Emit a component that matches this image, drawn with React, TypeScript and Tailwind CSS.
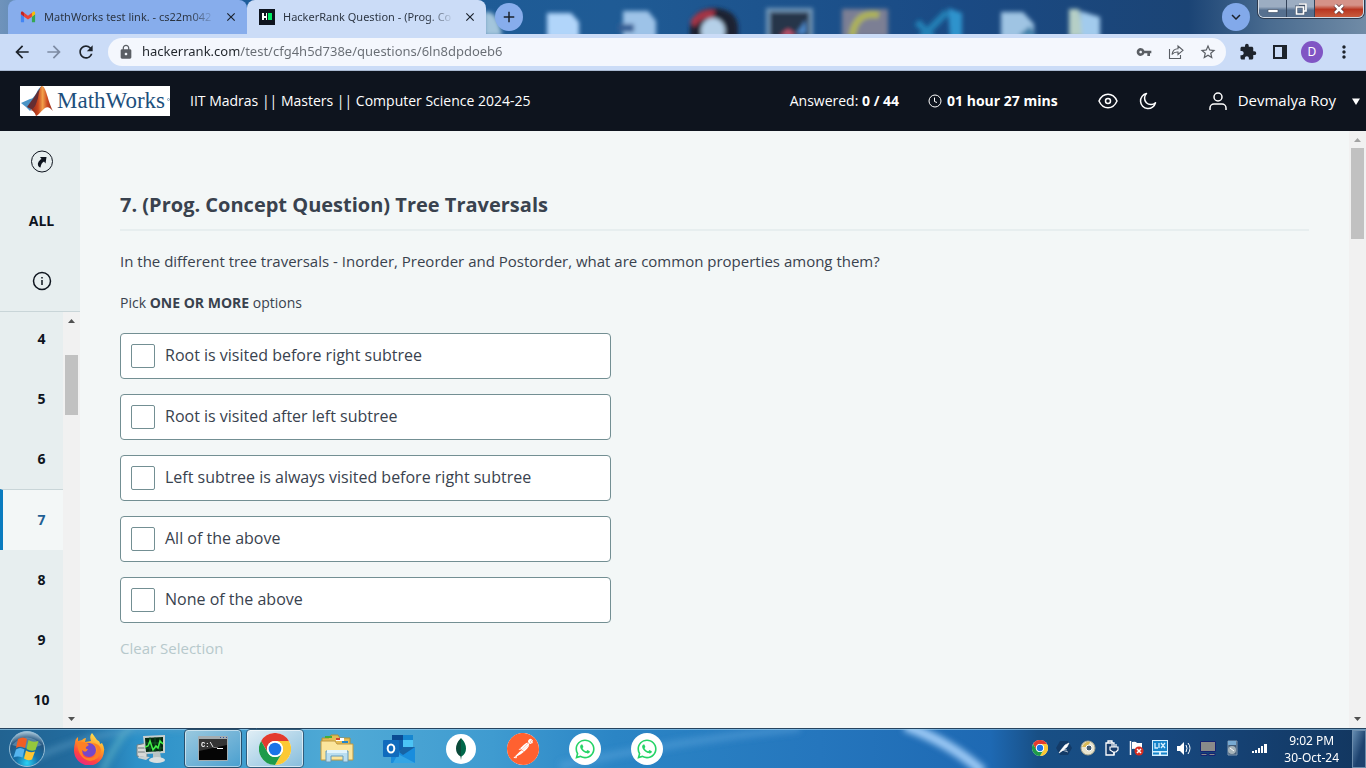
import type { ReactNode } from "react";
import { MdArrowBack, MdArrowForward, MdRefresh, MdLock, MdVpnKey, MdStarBorder, MdExtension, MdMoreVert, MdClose, MdAdd, MdKeyboardArrowDown } from "react-icons/md";
import { FaWhatsapp } from "react-icons/fa";
import { SiPostman } from "react-icons/si";

const options = [
  "Root is visited before right subtree",
  "Root is visited after left subtree",
  "Left subtree is always visited before right subtree",
  "All of the above",
  "None of the above",
];

const questions = [4, 5, 6, 7, 8, 9, 10];

function ChromeLogo({ className }: { className: string }) {
  return (
    <svg viewBox="0 0 48 48" className={className} aria-hidden="true">
      <circle cx="24" cy="24" r="24" fill="#fff" />
      <path d="M3.2 12A24 24 0 0 1 44.8 12L24 12A12 12 0 0 0 13.6 30Z" fill="#e33b2e" />
      <path d="M44.8 12A24 24 0 0 1 24 48L34.4 30A12 12 0 0 0 24 12Z" fill="#fcc934" />
      <path d="M24 48A24 24 0 0 1 3.2 12L13.6 30A12 12 0 0 0 34.4 30Z" fill="#1e9b4a" />
      <circle cx="24" cy="24" r="12" fill="#fff" />
      <circle cx="24" cy="24" r="9.5" fill="#1a73e8" />
    </svg>
  );
}

function GmailLogo() {
  return (
    <svg viewBox="-1 0 18 12" className="h-3 w-4 shrink-0" aria-hidden="true">
      <path d="M1 12h2.6V5.6L0 2.9V11a1 1 0 0 0 1 1Z" fill="#4285f4" />
      <path d="M12.4 12H15a1 1 0 0 0 1-1V2.9l-3.6 2.7Z" fill="#34a853" />
      <path d="M12.4 1.2v4.4L16 2.9V1.5c0-1.4-1.5-2-2.5-1.2Z" fill="#fbbc04" />
      <path d="M3.6 5.6V1.2L8 4.5l4.4-3.3v4.4L8 8.9Z" fill="#ea4335" />
      <path d="M0 1.5v1.4l3.6 2.7V1.2L2.5.3C1.4-.5 0 .1 0 1.5Z" fill="#c5221f" />
    </svg>
  );
}

function HackerRankLogo() {
  return (
    <svg viewBox="0 0 16 16" className="size-4 shrink-0" aria-hidden="true">
      <rect width="16" height="16" fill="#0e141e" />
      <path d="M3 4h2v3h2V4h1v7H7V9H5v2H3Z" fill="#fff" />
      <rect x="9" y="4" width="4" height="7" fill="#00ea64" />
    </svg>
  );
}

function DesktopBackdrop() {
  return (
    <svg viewBox="0 0 1366 34" preserveAspectRatio="none" className="absolute inset-0 size-full" aria-hidden="true">
      <defs>
        <linearGradient id="sky">
          <stop offset="0" stopColor="#6f93bb" />
          <stop offset=".1" stopColor="#1c5c9a" />
          <stop offset=".45" stopColor="#1f5b95" />
          <stop offset=".7" stopColor="#1a4a84" />
          <stop offset=".87" stopColor="#1b4475" />
          <stop offset=".93" stopColor="#4a6c90" />
          <stop offset="1" stopColor="#708ba6" />
        </linearGradient>
        <filter id="frost" x="-20%" y="-50%" width="140%" height="200%">
          <feGaussianBlur stdDeviation="2" />
        </filter>
      </defs>
      <rect width="1366" height="34" fill="url(#sky)" />
      <g filter="url(#frost)">
        <path d="M484 12q14-3 18 24h-18z" fill="#a3c5dc" />
        <path d="M547 13h24l8 9v16h-32z" fill="#b1d5fa" />
        <path d="M623 11h25l8 10v17h-33z" fill="#9dc3e8" />
        <path d="M618 24h16v8h-16z" fill="#355f95" />
        <path d="M690 28q2-20 26-20q20 2 22 18v12h-48z" fill="#1a2233" />
        <path d="M690 22q8-14 25-12l-2 8q-14 0-18 9z" fill="#a63646" />
        <ellipse cx="713" cy="31" rx="12" ry="13" fill="#b5d0e8" />
        <path d="M766 8h47v30h-47z" fill="#7196b8" />
        <path d="M770 12h39v26h-39z" fill="#26364a" />
        <path d="m780 36 8-7 8 6z" fill="#cc5770" />
        <path d="m796 34 10-14v14z" fill="#4b86c8" />
        <path d="M842 9h46v28h-46z" fill="#7c7f94" />
        <path d="M879 15q-24-4-27 22" fill="none" stroke="#adb259" strokeWidth="7" />
        <path d="m917 22 16 16m-14 2 28-28" fill="none" stroke="#2080b5" strokeWidth="7" />
        <path d="m948 8 14 5v26h-12z" fill="#2f93cc" />
        <path d="M1001 12h22l11 12v14h-33z" fill="#9fc4e3" />
        <path d="m1018 36 12-10 7 11z" fill="#3e7fa9" />
        <path d="M1069 9h10l5 28h-15z" fill="#b5cfc6" />
        <path d="m1080 11 20 6v21h-18z" fill="#a2cbed" />
      </g>
    </svg>
  );
}

function Tab({ title, icon, active }: { title: string; icon: ReactNode; active?: boolean }) {
  return (
    <div className={`flex w-[239px] items-center gap-2 rounded-t-lg pr-2 pl-3 ${active ? "bg-[#cbdcf7]" : "bg-[#87adec]"}`}>
      {icon}
      <span className="flex-1 bg-linear-to-r from-[#29323f] from-85% to-transparent bg-clip-text text-[11px] whitespace-nowrap text-transparent">{title}</span>
      <button aria-label="Close tab" className="flex size-4 items-center justify-center text-[#1b222c]">
        <MdClose size={14} />
      </button>
    </div>
  );
}

function BrowserChrome() {
  return (
    <div className="shrink-0 font-['Noto_Sans','Open_Sans',sans-serif]">
      <div className="relative h-[34px]">
        <DesktopBackdrop />
        <div className="relative flex h-full items-start">
          <div className="flex h-full pl-2">
            <Tab title="MathWorks test link. - cs22m042" icon={<GmailLogo />} />
            <Tab active title="HackerRank Question - (Prog. Co" icon={<HackerRankLogo />} />
          </div>
          <button aria-label="New tab" className="mt-[3px] ml-[9px] flex size-7 items-center justify-center rounded-full bg-[#87adec] text-[#1b222c]">
            <MdAdd size={18} />
          </button>
          <button aria-label="Search tabs" className="mt-[3px] mr-2 ml-auto flex size-7 items-center justify-center rounded-full bg-[#82a9ea] text-[#1b222c]">
            <MdKeyboardArrowDown size={18} />
          </button>
          <div className="mr-0.5 flex h-[18px] overflow-hidden rounded-b-md border border-t-0 border-[#d3dbe5] text-white ring-1 ring-[#2c3a4e]">
            <button aria-label="Minimize" className="flex w-7 items-center justify-center border-r border-[#33435a] bg-linear-to-b from-[#9cadc2] from-40% to-[#56708f] to-60%">
              <svg viewBox="0 0 12 12" className="size-3" aria-hidden="true">
                <path d="M1 6.500h10v3H1z" fill="#fff" stroke="#46566c" strokeWidth=".7" />
              </svg>
            </button>
            <button aria-label="Restore" className="flex w-7 items-center justify-center border-r border-[#33435a] bg-linear-to-b from-[#9cadc2] from-40% to-[#56708f] to-60%">
              <svg viewBox="0 0 12 12" className="size-3" aria-hidden="true">
                <path d="M4 1h7v7H9M1.500 4h7v7h-7z" fill="none" stroke="#46566c" strokeWidth="3" />
                <path d="M4 1h7v7H9M1.500 4h7v7h-7z" fill="none" stroke="#fff" strokeWidth="1.700" />
              </svg>
            </button>
            <button aria-label="Close window" className="flex w-12 items-center justify-center bg-linear-to-b from-[#d59288] from-30% via-[#b93520] via-55% to-[#c85b3d]">
              <svg viewBox="0 0 12 10" className="h-[10px] w-3" aria-hidden="true">
                <path d="m2 1 8 8m0-8L2 9" stroke="#5b3237" strokeWidth="4" />
                <path d="m2 1 8 8m0-8L2 9" stroke="#fff" strokeWidth="2.500" />
              </svg>
            </button>
          </div>
        </div>
      </div>
      <div className="flex h-[37px] items-center border-b border-[#a9b9d2] bg-[#cbdcf7] pr-1.5 text-[#1d232b]">
        <div className="flex w-[108px] items-center gap-3 pl-3">
          <button aria-label="Back"><MdArrowBack size={20} /></button>
          <button aria-label="Forward" className="text-[#7d8ba3]"><MdArrowForward size={20} /></button>
          <button aria-label="Reload"><MdRefresh size={20} /></button>
        </div>
        <div className="flex h-7 flex-1 items-center rounded-full bg-[#f4f7fd] pr-0.5 pl-[10px] text-[#5a5e64]">
          <MdLock size={16} className="mr-2 shrink-0" />
          <input
            aria-label="Address"
            defaultValue="hackerrank.com/test/cfg4h5d738e/questions/6ln8dpdoeb6"
            className="min-w-0 flex-1 bg-linear-to-r from-[#20252b] from-[97px] to-[#676c73] to-[97px] bg-clip-text text-[13px] text-transparent outline-none"
          />
          <div className="flex items-center">
            <button aria-label="Passwords" className="flex w-8 justify-center"><MdVpnKey size={16} /></button>
            <button aria-label="Share" className="flex w-8 justify-center">
              <svg viewBox="0 0 16 16" className="size-4" fill="none" stroke="currentColor" strokeWidth="1.100" aria-hidden="true">
                <path d="M1.500 5v9.500h11V11M4 10.500c.6-4 3-5.700 6-5.700V2L15 6.300l-5 4.200V8C7.500 7.800 5.500 8.500 4 10.500Z" />
              </svg>
            </button>
            <button aria-label="Bookmark" className="flex w-8 justify-center"><MdStarBorder size={18} /></button>
          </div>
        </div>
        <div className="ml-1.5 flex items-center">
          <button aria-label="Extensions" className="flex w-8 justify-center"><MdExtension size={18} /></button>
          <button aria-label="Side panel" className="flex w-8 justify-center">
            <svg viewBox="0 0 14 14" className="size-[14px]" aria-hidden="true">
              <path fillRule="evenodd" d="M0 0h14v14H0ZM2 2v10h7V2Z" fill="currentColor" />
            </svg>
          </button>
          <button aria-label="Profile" className="flex w-8 justify-center">
            <span className="flex size-[22px] items-center justify-center rounded-full bg-[#8055c4] text-xs text-white">D</span>
          </button>
          <button aria-label="Menu" className="flex w-8 justify-center"><MdMoreVert size={20} /></button>
        </div>
      </div>
    </div>
  );
}

function MathWorksLogo() {
  return (
    <div className="flex h-[30px] w-[150px] shrink-0 items-center bg-white">
      <svg viewBox="0 0 34 30" className="h-[30px] w-[34px] shrink-0" aria-hidden="true">
        <defs>
          <linearGradient id="membrane">
            <stop offset="0" stopColor="#7b2218" />
            <stop offset=".35" stopColor="#c8451f" />
            <stop offset=".55" stopColor="#f2a04a" />
            <stop offset=".75" stopColor="#cc4a22" />
            <stop offset="1" stopColor="#8c2a1b" />
          </linearGradient>
        </defs>
        <path d="m1 17 9-4c3 0 4-3 6-5 2-5 4-7 6-8l-6 17-6 8-4-4Z" fill="#4a94c6" />
        <path d="m7 21 5-7c3-3 5-9 10-14l-4 17-5 7Z" fill="#652d32" />
        <path d="M10 24c5-1 6-6 8-12 1-6 2-12 4-12 4 0 6 16 11 25-3-3-5-5-8-3-4 3-6 7-9 8-1-3-3-6-6-6Z" fill="url(#membrane)" />
      </svg>
      <span className="flex-1 pl-[3px] font-['Liberation_Serif',serif] text-[23px] leading-[30px] text-[#1d4f7c]">MathWorks</span>
      <svg viewBox="0 0 3 3" className="mb-1 size-[3px] shrink-0" aria-hidden="true">
        <circle cx="1.500" cy="1.500" r="1" fill="none" stroke="#7d9ab5" />
      </svg>
    </div>
  );
}

function Header() {
  return (
    <header className="flex h-[60px] shrink-0 items-center bg-[#0e141e] pr-[5px] pl-5 text-sm text-white">
      <MathWorksLogo />
      <h1 className="ml-5 whitespace-nowrap">IIT Madras || Masters || Computer Science 2024-25</h1>
      <div className="ml-auto whitespace-nowrap">Answered: <b>0 / 44</b></div>
      <div className="ml-[29px] flex items-center gap-[5px] whitespace-nowrap">
        <svg viewBox="0 0 14 14" className="size-[14px]" fill="none" stroke="currentColor" aria-hidden="true">
          <circle cx="7" cy="7" r="6" />
          <path d="M6.500 3.500v4l2.500 1" />
        </svg>
        <b>01 hour 27 mins</b>
      </div>
      <button aria-label="Preview" className="ml-10">
        <svg viewBox="0 0 20 20" className="size-5" fill="none" stroke="currentColor" strokeWidth="1.500" aria-hidden="true">
          <path d="M1 10c4-9 14-9 18 0-4 9-14 9-18 0Z" />
          <circle cx="10" cy="10" r="2.500" />
        </svg>
      </button>
      <button aria-label="Dark mode" className="ml-5">
        <svg viewBox="0 0 20 20" className="size-5" fill="none" stroke="currentColor" strokeWidth="1.500" strokeLinejoin="round" aria-hidden="true">
          <path d="M8.500 2.500a7.600 7.600 0 1 0 9 9.300 6.300 6.300 0 0 1-9-9.300Z" />
        </svg>
      </button>
      <button className="ml-[50px] flex items-center text-[15px] whitespace-nowrap">
        <svg viewBox="0 0 20 20" className="mr-[10px] size-5" fill="none" stroke="currentColor" strokeWidth="1.500" aria-hidden="true">
          <circle cx="10" cy="6" r="4" />
          <path d="M2 19v-2a4 4 0 0 1 4-4h8a4 4 0 0 1 4 4v2" />
        </svg>
        Devmalya Roy
        <svg viewBox="0 0 10 8" className="ml-[15px] h-2 w-[10px]" aria-hidden="true">
          <path d="M1 1.500h8L5 8Z" fill="currentColor" />
        </svg>
      </button>
    </header>
  );
}

function Arrow({ down, faint }: { down?: boolean; faint?: boolean }) {
  return (
    <svg viewBox="0 0 17 17" className={`size-[17px] shrink-0 ${faint ? "text-[#a3a3a3]" : "text-[#505050]"}`} aria-hidden="true">
      <path d={down ? "M5 6h7l-3.500 4Z" : "M5 11h7L8.500 7Z"} fill="currentColor" />
    </svg>
  );
}

function Sidebar() {
  return (
    <nav aria-label="Questions" className="flex w-20 shrink-0 flex-col bg-[#e7eeef] text-sm font-semibold text-[#0e141e]">
      <div className="flex shrink-0 flex-col border-b border-[#c9d5d8] pl-[3px]">
        <button aria-label="Collapse" className="flex h-[60px] items-center justify-center">
          <svg viewBox="0 0 24 24" className="size-6" aria-hidden="true">
            <circle cx="12" cy="12.500" r="10.500" fill="none" stroke="currentColor" />
            <path d="M10 8h6.500l-1 6.500-1.500-2q-3 1.500-3.500 6l-1.500-.5q-3-3.500 1.500-7.500l1-.500Z" fill="currentColor" />
          </svg>
        </button>
        <button className="h-[60px] font-bold">ALL</button>
        <button aria-label="Information" className="flex h-[60px] items-center justify-center">
          <svg viewBox="0 0 20 20" className="size-5" fill="none" stroke="currentColor" strokeWidth="1.500" aria-hidden="true">
            <circle cx="10" cy="10" r="8.500" />
            <path d="M10 9v5M10 6v1.500" />
          </svg>
        </button>
      </div>
      <div className="flex min-h-0 flex-1">
        <ul className="flex-1 overflow-hidden">
          {questions.map((n) => (
            <li key={n} className="first:-mt-[3px]">
              {n === 7 ? (
                <button aria-current="page" className="h-[61px] w-full border-t border-l-[3px] border-t-[#c9d5d8] border-l-[#097bbf] bg-[#f3f7f7] pl-[17px] font-bold text-[#1f5f94]">{n}</button>
              ) : (
                <button className="h-[60px] w-full pl-5 font-bold">{n}</button>
              )}
            </li>
          ))}
        </ul>
        <div className="flex w-[17px] flex-col items-center bg-[#f1f1f1]">
          <Arrow />
          <div className="mt-[26px] mb-auto h-[60px] w-[13px] bg-[#c1c1c1]" />
          <Arrow down />
        </div>
      </div>
    </nav>
  );
}

function Question() {
  return (
    <main className="flex-1 overflow-hidden bg-[#f3f7f7] px-10 pt-[60px] text-[#39424e]">
      <h2 className="border-b-2 border-[#e7eeef] pb-[10px] text-xl leading-7 font-bold">7. (Prog. Concept Question) Tree Traversals</h2>
      <p className="mt-5 text-[15px] leading-5">In the different tree traversals - Inorder, Preorder and Postorder, what are common properties among them?</p>
      <fieldset className="mt-[22px] max-w-[491px]">
        <legend className="text-sm leading-5">Pick <b>ONE OR MORE</b> options</legend>
        <div className="mt-5 flex flex-col gap-[15px]">
          {options.map((text) => (
            <label key={text} className="flex h-[46px] items-center rounded border border-[#738f93] bg-white px-[10px]">
              <input type="checkbox" className="size-6 appearance-none rounded-xs border border-[#738f93] bg-white" />
              <span className="pb-0.5 pl-[10px]">{text}</span>
            </label>
          ))}
        </div>
      </fieldset>
      <button className="mt-[15px] text-[15px] leading-5 text-[#b7c9cc]">Clear Selection</button>
    </main>
  );
}

function TaskbarBackdrop() {
  return (
    <svg viewBox="0 0 1366 40" preserveAspectRatio="none" className="absolute inset-0 size-full" aria-hidden="true">
      <defs>
        <linearGradient id="bar">
          <stop offset="0" stopColor="#226391" />
          <stop offset=".06" stopColor="#226c9f" />
          <stop offset=".1" stopColor="#2d91c8" />
          <stop offset=".25" stopColor="#50aad6" />
          <stop offset=".36" stopColor="#3f9bd0" />
          <stop offset=".45" stopColor="#2b85c5" />
          <stop offset=".6" stopColor="#2576bd" />
          <stop offset=".725" stopColor="#1e69b3" />
          <stop offset=".76" stopColor="#184f85" />
          <stop offset=".85" stopColor="#17487f" />
          <stop offset="1" stopColor="#12365f" />
        </linearGradient>
        <filter id="glow" x="-50%" y="-50%" width="200%" height="200%">
          <feGaussianBlur stdDeviation="3" />
        </filter>
      </defs>
      <rect width="1366" height="40" fill="url(#bar)" />
      <g filter="url(#glow)" fill="none">
        <path d="M905-2q45 16 78 46" stroke="#9cc9f5" strokeWidth="10" />
        <path d="M102 44Q112 20 132-4" stroke="#62b8c8" strokeWidth="5" opacity=".7" />
        <path d="M35 30Q100-2 190 0" stroke="#69a8cd" strokeWidth="5" opacity=".5" />
        <path d="M560 38Q680 12 800 0" stroke="#6cb3e4" strokeWidth="8" opacity=".35" />
      </g>
      <path d="M0 .5h1366" stroke="#26445f" />
      <path d="M0 1.500h1366" stroke="#9ed0ee" opacity=".65" />
    </svg>
  );
}

function StartOrb() {
  return (
    <svg viewBox="0 0 38 38" className="size-[38px]" aria-hidden="true">
      <defs>
        <radialGradient id="orb" cx=".5" cy=".9" r=".9">
          <stop offset="0" stopColor="#29d2f5" />
          <stop offset=".35" stopColor="#1471a9" />
          <stop offset=".75" stopColor="#23557f" />
          <stop offset="1" stopColor="#b0cbdc" />
        </radialGradient>
      </defs>
      <circle cx="19" cy="19" r="17.500" fill="url(#orb)" stroke="#96bdd5" />
      <path d="M4 15Q19 0 34 15q-14 6-30 0Z" fill="#c8e0ed" opacity=".3" />
      <path d="M10 9q5-3 9 0l-2 9q-5-3-9 0Z" fill="#f25e24" />
      <path d="M20.500 10q4 3 10 1l-3 9q-4 2-9-1Z" fill="#95c83d" />
      <path d="M8 19.500q4-3 8.500 0l-2 8q-5-2-9 0Z" fill="#55b4ee" />
      <path d="M18 20.500q4 3 9 1l-3 8q-4 2-8-1Z" fill="#fec631" />
    </svg>
  );
}

function Firefox() {
  return (
    <svg viewBox="0 0 32 32" className="size-8" aria-hidden="true">
      <defs>
        <linearGradient id="fox" x1=".8" y1="0" x2=".3" y2="1">
          <stop offset="0" stopColor="#fff15b" />
          <stop offset=".4" stopColor="#ff9a25" />
          <stop offset=".75" stopColor="#ff4340" />
          <stop offset="1" stopColor="#e92785" />
        </linearGradient>
      </defs>
      <path d="M2 10q0-4 3-6v4l4-1q2-2 4-2l-1 4 6-1q-2-5 1-8l5 7q3 1 3 4l2-1q3 5 2 8A15 15 0 0 1 1 17q0-4 1-7Z" fill="url(#fox)" />
      <circle cx="16" cy="17" r="7" fill="#7648c8" />
      <path d="M4 9q8-1 12 3l-3 2q-1 2 2 2-2 5-6 1 0 9 8 8 7-1 7-8-1-5-6-7 9 0 10 7-1 10-11 11Q5 26 4 9Z" fill="#ff8024" />
    </svg>
  );
}

function PerfMonitor() {
  return (
    <svg viewBox="0 0 32 30" className="h-[30px] w-8" aria-hidden="true">
      <path d="m2 11 10-2v15l-10-2Z" fill="#d8dad8" stroke="#6f7e83" />
      <path d="M3 14h7m-7 4h7" stroke="#707a7c" />
      <path d="m8 2 22-1v18l-20 1Z" fill="#c7cfce" />
      <path d="m10 4 18-1v14l-17 1Z" fill="#052910" />
      <path d="M10 9h18m-18 5h18M15 3v15m5-15v15m5-15v15" stroke="#17662f" strokeWidth=".7" />
      <path d="m10 13 3-1 2-5 3 9 3-4 2 2 2-7 3 3" fill="none" stroke="#43f047" strokeWidth="1.500" />
      <path d="m18 19 7-1 1 6-8 1Z" fill="#b9c4c4" />
      <ellipse cx="22" cy="26" rx="8" ry="3" fill="#d9dfdf" />
      <path d="m4 22 11 1-4 3-8-2Z" fill="#cbd1d1" />
    </svg>
  );
}

function Terminal() {
  return (
    <svg viewBox="0 0 30 25" className="h-[25px] w-[30px]" aria-hidden="true">
      <rect width="30" height="25" rx="1" fill="#a3acb0" />
      <path d="M1 3h28v21H1Z" fill="#050505" />
      <path d="M22 1.500h1m2 0h1m2 0h1" stroke="#32559d" />
      <path d="M1 3h28v6L1 15Z" fill="#343434" />
      <text x="3" y="11" fill="#fff" fontSize="7" fontFamily="Liberation Mono, monospace" fontWeight="bold">C:\_</text>
      <path d="M19 12.500h6" stroke="#fff" />
    </svg>
  );
}

function Explorer() {
  return (
    <svg viewBox="0 0 36 32" className="h-8 w-9" aria-hidden="true">
      <path d="M3 5h7l2-3h7l2 3h10v20H3Z" fill="#e5bc54" stroke="#a8903f" />
      <path d="M6 3h7v2H6z" fill="#42ae3a" />
      <path d="M17 5h8v3h-8z" fill="#fff" />
      <path d="M17 5h4v2h-4z" fill="#d64233" />
      <path d="M23 8h6v2h-6z" fill="#2287ca" />
      <path d="M2 8h14l2 3h16v16H2Z" fill="#fbe59c" stroke="#bf9942" />
      <path d="M7 18h22v11h-5v-6H12v6H7Z" fill="#b9def0" stroke="#659ab9" />
      <path d="M8 17h20v3H8z" fill="#e2f4fb" />
    </svg>
  );
}

function Outlook() {
  return (
    <svg viewBox="0 0 32 30" className="h-[30px] w-8" aria-hidden="true">
      <path d="M9 1h21v20H9z" fill="#0f60ad" />
      <path d="M9 1h11v5H9z" fill="#0a4b93" />
      <path d="M20 1h10v5H20z" fill="#1787d0" />
      <path d="M20 6h10v7H20z" fill="#4cc4f5" />
      <path d="M8 19 32 13v16H8Z" fill="#198ddd" />
      <path d="m15 20 17 9H10Z" fill="#34a5e5" />
      <path d="m32 13-12 8-4-3 4-5h10Z" fill="#1763a5" />
      <rect y="6" width="16" height="17" rx="1" fill="#106bbd" />
      <ellipse cx="8" cy="14.500" rx="3.300" ry="4" fill="none" stroke="#fff" strokeWidth="2" />
    </svg>
  );
}

function MongoLeaf() {
  return (
    <svg viewBox="0 0 12 22" className="h-[22px] w-3" aria-hidden="true">
      <path d="M6 0q5 5 5 10.500Q11 16 6.500 18.500L6 22Z" fill="#00684a" />
      <path d="M6 0Q1 5 1 10.500 1 16 5.500 18.500L6 22Z" fill="#0b4a3a" />
    </svg>
  );
}

function TaskButton({ label, active, current, children }: { label: string; active?: boolean; current?: boolean; children: ReactNode }) {
  return (
    <button
      aria-label={label}
      className={`flex h-[39px] w-[58px] items-center justify-center rounded-sm border ${current ? "border-[#315d7c] bg-linear-to-br from-[#e1eff6] to-[#86bddc] ring-1 ring-white/60 ring-inset" : active ? "border-[#27506e] bg-linear-to-br from-[#9ac9df] to-[#489fcf] ring-1 ring-white/50 ring-inset" : "border-transparent"}`}
    >
      {children}
    </button>
  );
}

function TrayIcon({ label, children }: { label: string; children: ReactNode }) {
  return (
    <button aria-label={label}>
      <svg viewBox="0 0 16 16" className="size-4" aria-hidden="true">{children}</svg>
    </button>
  );
}

function Taskbar() {
  return (
    <footer className="relative h-10 shrink-0 font-['Noto_Sans','Open_Sans',sans-serif]">
      <TaskbarBackdrop />
      <div className="relative flex h-full items-center">
        <button aria-label="Start" className="ml-2 pt-px"><StartOrb /></button>
        <div className="ml-[14px] flex gap-1 pt-px">
          <TaskButton label="Firefox"><Firefox /></TaskButton>
          <TaskButton label="Performance monitor"><PerfMonitor /></TaskButton>
          <TaskButton label="Command prompt" active><Terminal /></TaskButton>
          <TaskButton label="Chrome" current><ChromeLogo className="size-8" /></TaskButton>
          <TaskButton label="File explorer"><Explorer /></TaskButton>
          <TaskButton label="Outlook"><Outlook /></TaskButton>
          <TaskButton label="MongoDB Compass">
            <span className="flex size-[30px] items-center justify-center rounded-full bg-white"><MongoLeaf /></span>
          </TaskButton>
          <TaskButton label="Postman">
            <span className="flex size-8 items-center justify-center rounded-full bg-white text-[#ff6130]"><SiPostman size={32} /></span>
          </TaskButton>
          <TaskButton label="WhatsApp">
            <span className="flex size-8 items-center justify-center rounded-full bg-white text-[#25d366]"><FaWhatsapp size={22} /></span>
          </TaskButton>
          <TaskButton label="WhatsApp">
            <span className="flex size-8 items-center justify-center rounded-full bg-white text-[#25d366]"><FaWhatsapp size={22} /></span>
          </TaskButton>
        </div>
        <div className="mr-4 ml-auto flex items-center gap-2">
          <button aria-label="Chrome notifications"><ChromeLogo className="size-4" /></button>
          <TrayIcon label="Power tool">
            <path d="M4 1h8l4 7-4 7H4L0 8Z" fill="#133b68" />
            <path d="m3 13 2-3 4-5 4-2-2 4-5 4Zm3-3 6 2m-6-3 5 1" fill="#fff" stroke="#fff" strokeWidth=".6" />
          </TrayIcon>
          <TrayIcon label="Disc">
            <circle cx="8" cy="8" r="7" fill="#e9e5cf" stroke="#aaa68e" />
            <path d="M2 7q3-6 8-5L8 7z" fill="#d9b956" />
            <circle cx="9" cy="8" r="3" fill="#425b72" stroke="#fff" />
          </TrayIcon>
          <TrayIcon label="Battery">
            <path d="M2 3h8v12H2zM4 1h4v2H4z" fill="#193e6d" stroke="#fff" strokeWidth="1.300" />
            <path d="M8 4v3m4-3v3M6 7h8v3l-2 2H9l-3-2ZM10 12v3" fill="#193e6d" stroke="#fff" strokeWidth="1.200" />
          </TrayIcon>
          <TrayIcon label="Action center">
            <path d="M2.500 1v14" stroke="#fff" strokeWidth="1.500" />
            <path d="M4 2q4-1 5 1h5v7H9Q7 8 4 9Z" fill="#fff" />
            <circle cx="11" cy="11" r="4.500" fill="#d92c1f" />
            <path d="m9 9 4 4m0-4-4 4" stroke="#fff" strokeWidth="1.500" />
          </TrayIcon>
          <TrayIcon label="Graphics">
            <path d="M0 0h16v16H0z" fill="#d5efff" />
            <path d="M1 1h14v10H1z" fill="#1683c9" />
            <path d="M3 3v5h3M7 3v5m2-5 4 5m0-5L9 8" fill="none" stroke="#d5efff" strokeWidth="1.300" />
            <path d="M1 13.500h6m2 0h6" stroke="#1683c9" strokeWidth="2" />
          </TrayIcon>
          <TrayIcon label="Volume">
            <path d="M1 6h3l4-4v13l-4-4H1Z" fill="#fff" />
            <path d="M10 5q2 3 0 7m2-9q4 5 0 11" fill="none" stroke="#fff" />
          </TrayIcon>
          <TrayIcon label="Display">
            <path d="M.5 1.500h15v10H.5zM1 13.500h6v2H1zm8 0h6v2H9z" fill="#8a8a8a" stroke="#152373" />
          </TrayIcon>
          <TrayIcon label="Device">
            <path d="M4 1h9v14H4z" fill="#435d79" stroke="#8298af" />
            <path d="M4 1h8v4H4z" fill="#78aad2" />
            <circle cx="8" cy="10" r="4" fill="#a7b4ba" />
            <path d="m6 8 4 3" stroke="#fff" />
          </TrayIcon>
          <button aria-label="Network" className="ml-1">
            <svg viewBox="0 0 16 16" className="size-4" aria-hidden="true">
              <path d="M0 11h2v2H0zm3-1h2v3H3zm3-2h2v5H6zm3-2h2v7H9zm3-2h3v9h-3z" fill="#fff" />
            </svg>
          </button>
        </div>
        <time className="mr-[13px] pt-0.5 text-center text-xs leading-[17px] whitespace-nowrap text-white">9:02 PM<br />30-Oct-24</time>
        <button aria-label="Show desktop" className="mt-0.5 h-[38px] w-[14px] border border-[#6c8cac] bg-linear-to-br from-[#658cb0] to-[#1d426f] to-60%" />
      </div>
    </footer>
  );
}

export default function App() {
  return (
    <div className="flex h-screen flex-col overflow-hidden font-['Open_Sans','Noto_Sans',sans-serif]">
      <BrowserChrome />
      <Header />
      <div className="flex min-h-0 flex-1">
        <Sidebar />
        <Question />
        <div className="flex w-[17px] shrink-0 flex-col items-center bg-[#f1f1f1]">
          <Arrow faint />
          <div className="mb-auto h-[91px] w-[13px] bg-[#c1c1c1]" />
          <Arrow down />
        </div>
      </div>
      <Taskbar />
    </div>
  );
}
